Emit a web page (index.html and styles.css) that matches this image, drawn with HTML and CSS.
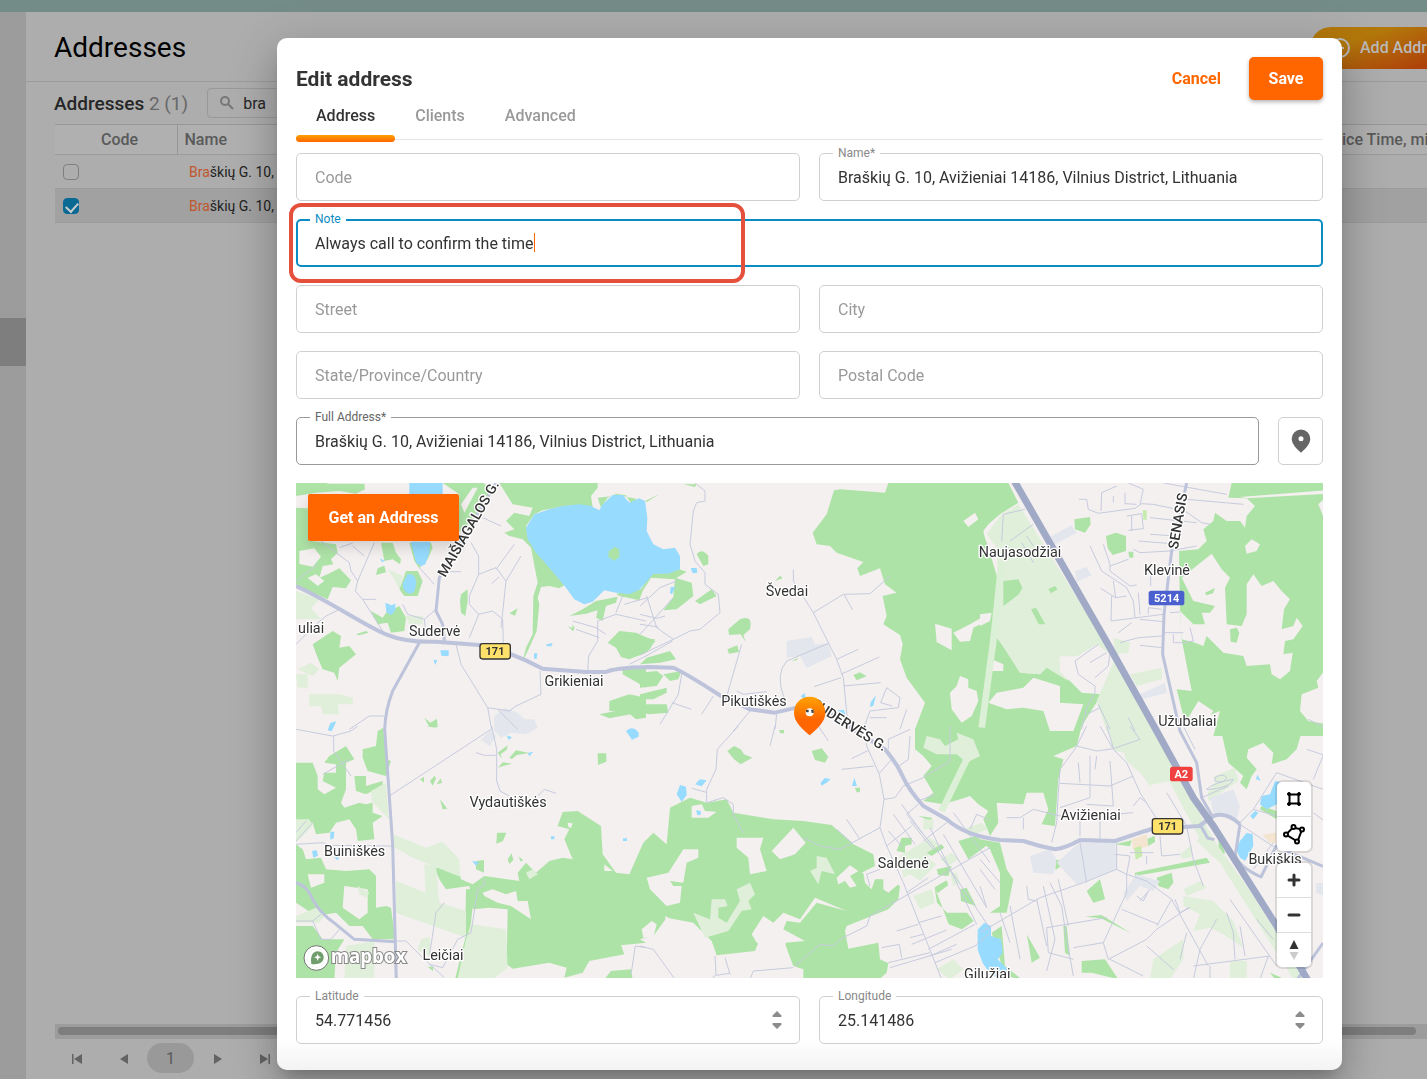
FILE: index.html
```html
<!DOCTYPE html>
<html lang="en">
<head>
  <meta charset="UTF-8">
  <meta name="viewport" content="width=device-width, initial-scale=1.0">
  <title>Addresses</title>
  <link rel="stylesheet" href="styles.css">
</head>
<body>
  <div class="topbar"></div>

  <div class="page">
    <nav class="sidebar"><div class="sidebar-active"></div></nav>

    <main class="content">
      <header class="page-header">
        <h1>Addresses</h1>
        <button class="add-button">
          <svg width="20" height="20" viewBox="0 0 20 20" fill="none" stroke="currentColor" stroke-width="2"><circle cx="10" cy="10" r="9"/><path d="M10 6v8M6 10h8"/></svg>
          Add Address
        </button>
      </header>

      <div class="list-bar">
        <h2>Addresses <span>2 (1)</span></h2>
        <div class="search">
          <svg width="16" height="16" viewBox="0 0 16 16" fill="none" stroke="currentColor" stroke-width="2"><circle cx="6" cy="6" r="4"/><path d="M9 9l5 5"/></svg>
          <input type="text" value="bra" aria-label="Search">
        </div>
      </div>

      <table class="list">
        <colgroup><col class="col-check"><col class="col-code"><col class="col-name"><col></colgroup>
        <thead>
          <tr><th></th><th class="code">Code</th><th>Name</th><th>Service Time, min</th></tr>
        </thead>
        <tbody>
          <tr>
            <td><input type="checkbox" aria-label="Select row 1"></td><td></td>
            <td class="name"><em>Bra</em>škių G. 10, Avižieniai</td><td></td>
          </tr>
          <tr class="selected">
            <td><input type="checkbox" aria-label="Select row 2" checked></td><td></td>
            <td class="name"><em>Bra</em>škių G. 10, Avižieniai</td><td></td>
          </tr>
        </tbody>
      </table>

      <div class="scrollbar"><div class="thumb"></div></div>
      <div class="pager">
        <button aria-label="First page"><svg width="10" height="10" viewBox="0 0 10 10"><path d="M0 0h1.500v10H0zM10 0v10L2 5z"/></svg></button>
        <button aria-label="Previous page"><svg width="10" height="10" viewBox="0 0 10 10"><path d="M9 0v10L1 5z"/></svg></button>
        <button class="current">1</button>
        <button aria-label="Next page"><svg width="10" height="10" viewBox="0 0 10 10"><path d="M1 0v10l8-5z"/></svg></button>
        <button aria-label="Last page"><svg width="10" height="10" viewBox="0 0 10 10"><path d="M8.500 0H10v10H8.500zM0 0v10l8-5z"/></svg></button>
      </div>
    </main>
  </div>

  <div class="overlay">
    <form class="modal" role="dialog" aria-labelledby="modalTitle">
      <div class="modal-header">
        <h2 id="modalTitle">Edit address</h2>
        <button type="button" class="cancel">Cancel</button>
        <button type="button" class="save">Save</button>
      </div>

      <div class="tabs">
        <button type="button" class="tab active">Address</button>
        <button type="button" class="tab">Clients</button>
        <button type="button" class="tab">Advanced</button>
      </div>

      <div class="row">
        <div class="field"><input type="text" placeholder="Code" aria-label="Code"></div>
        <div class="field">
          <label for="name">Name*</label>
          <input type="text" id="name" value="Braškių G. 10, Avižieniai 14186, Vilnius District, Lithuania">
        </div>
      </div>

      <div class="row">
        <div class="field focused">
          <label for="note">Note</label>
          <input type="text" id="note" value="Always call to confirm the time">
          <span class="caret"></span>
          <span class="highlight"></span>
        </div>
      </div>

      <div class="row">
        <div class="field"><input type="text" placeholder="Street" aria-label="Street"></div>
        <div class="field"><input type="text" placeholder="City" aria-label="City"></div>
      </div>

      <div class="row">
        <div class="field"><input type="text" placeholder="State/Province/Country" aria-label="State/Province/Country"></div>
        <div class="field"><input type="text" placeholder="Postal Code" aria-label="Postal Code"></div>
      </div>

      <div class="row">
        <div class="field strong">
          <label for="fullAddress">Full Address*</label>
          <input type="text" id="fullAddress" value="Braškių G. 10, Avižieniai 14186, Vilnius District, Lithuania">
        </div>
        <button type="button" class="pin-button" aria-label="Find on map">
          <svg width="20" height="24" viewBox="0 0 20 24"><path fill="#666" fill-rule="evenodd" d="M10 .5a9.300 9.300 0 0 0-9.300 9.300C.7 15 6 20.500 10 23.700c4-3.200 9.300-8.700 9.300-13.900A9.300 9.300 0 0 0 10 .5zm0 6.700a2.500 2.500 0 1 1 0 5 2.500 2.500 0 0 1 0-5z"/></svg>
        </button>
      </div>

      <div class="map">
        <svg class="map-canvas" viewBox="0 0 3081 1485" preserveAspectRatio="xMidYMid slice">
          <defs>
            <linearGradient id="pin" x1="0" y1="0" x2="0" y2="1"><stop offset="0" stop-color="#ffa200"/><stop offset="0.600" stop-color="#ff6600"/></linearGradient>
          </defs>

          <!-- forests -->
          <g class="forest">
            <g transform="translate(0 -6)">
              <path d="M0 0H55L100 8 205 8 207 25 180 38 130 30 60 35 0 45Z"/>
              <path d="M0 80L35 82 45 180 120 190 125 215 105 235 112 250 80 255 70 290 95 280 130 262 165 298 150 322 110 318 95 355 60 340 0 312Z"/>
              <path d="M440 6H560L590 20 565 80 520 130 480 160 490 40Z"/>
              <path d="M255 185H290L300 215 315 235 312 250 290 235 265 240ZM245 262l20-8 5 20-30 8Z"/>
              <path d="M340 185H405L410 200 395 235 370 262 355 240ZM330 270h35l15 30-15 45h-40l-15-20Z"/>
              <path d="M610 6H905L905 20 885 45 890 78 830 72 740 88 715 100 690 135 700 175 735 220 800 275 810 310 790 322 760 315 735 318 725 350 730 370 722 450 700 500 680 540 690 500 710 460 712 345 725 305 705 200 680 175 640 165 625 155 655 145 630 120 655 95 700 105 710 80 650 70 625 30Z"/>
              <path d="M905 50l10 30 20-30 25-12 30 5 15 25 20-5-5-10-50-10Z"/>
              <path d="M960 338L1035 325 1065 280 1140 262 1172 272 1135 295 1065 290 1040 330 1030 358 970 345Z"/>
              <path d="M820 405L860 385 900 360 965 347 960 365 930 375 920 420 900 410 905 388 870 398Z"/>
              <path d="M935 485L970 450 1020 455 1078 480 1050 515 1000 535 975 528 960 500Z"/>
              <path d="M50 490L110 450 135 465 130 500 160 495 180 520 130 560 125 600 115 575 80 565 65 530Z"/>
              <path d="M495 340L515 325 515 360 508 405 495 395 492 360ZM640 397l25-15-8 22ZM815 435l15 7-2-13 8 12-5 10ZM180 460l30-10 8 5-30 8Z"/>
              <path d="M225 390l35 20 10-15 40-20 20 35-5 40-40 5-10-30-30 5ZM385 710l18 15 20-12 2 25-25 0Z"/>
              <path d="M980 560h70v60l-70-40ZM940 660l60-20 50 10v60l-30 5-30-25h-50ZM910 700l90-18 20 15-80 15Z"/>
            </g>
            <g transform="translate(1032 -6)">
              <path d="M0 470L45 475 30 505 0 520ZM0 550L20 530 90 510 108 535 60 545ZM0 575l50-5 20 15-20 30-50 5ZM70 580l55-10-10 25-25 5ZM0 640l80-20v15l-40 20H0ZM0 670h80l5 25-60 5-25-10Z"/>
              <path d="M170 220q15-20 35 5v25l-15 5ZM105 290l50 15 5 40-50 40-40 3 30-40ZM165 360l50-35 15 20-50 25ZM265 445l35-30q40-15 30 30l-20 17 7 22-15-24-35 2ZM262 505l30-12 5 20-30 5ZM640 582l20-8 20 12-30 12ZM15 60l45-22-40 25ZM130 10h40l-5 8ZM405 300l15-16 8 8ZM455 540l20-10-5 8Z"/>
              <path d="M745 6L735 35 600 25 582 28 560 100 518 155 530 190 570 195 590 215 670 243 652 262 660 285 720 262 735 310 770 335 728 345 740 405 730 430 780 462 788 490 780 535 800 590 855 665 825 745 825 805 850 825 875 855 850 885 880 935 850 960 910 970 975 950 990 945 1015 970 1045 990 1030 1015 1050 1065 1075 1025 1070 965 1150 970 1160 935 1210 935 1225 985 1205 1030 1245 1035 1255 895 1270 835 1240 825 1310 795 1325 735 1385 640 1325 635 1290 600 1220 555 1200 580 1140 575 1095 500 1070 470 1075 300 1030 150 1045 130 1080 100 1135 65 1105 6Z"/>
            </g>
            <g transform="translate(2052 -6)">
              <path d="M283 115L330 108 332 130 315 155 285 145ZM378 165l30-10 30 10v45l-40 12-15-20ZM445 212h15v18h-12Z"/>
              <path d="M755 6H1040V765H940 700L720 690 695 700 660 720 610 705 590 625 635 630 605 475 600 385 597 210 655 205 680 180 670 145 700 120 705 95 740 120 780 120 795 140 800 105 825 75 800 52 745 50Z"/>
            </g>
            <g transform="translate(0 729)">
              <path d="M0 110L50 110 65 150 65 190 85 205 120 185 80 165 85 140 120 140 120 115 85 110 100 90 150 60 175 100 150 110 150 190 135 230 145 245 190 230 210 235 230 230 230 260 260 270 230 290 235 340 185 345 180 310 160 280 120 290 100 320 60 325 50 290 0 285Z"/>
              <path d="M200 70L240 60 245 15 262 5 270 100 285 105 270 150 215 135 200 95ZM175 150h35v30l50-15v15l-50 25-30-10Z"/>
              <path fill-rule="evenodd" d="M0 355L20 370 30 400 75 395 90 430 150 435 220 430 240 450 240 545 270 540 285 545 298 640 230 640 200 600 160 600 120 560 60 570 0 530ZM35 445h50v25l-40 15ZM145 480L215 490 215 560 190 580 140 545Z"/>
              <path d="M0 600L50 600 80 640 145 640 120 680 115 760 0 760Z"/>
              <path d="M372 160l12-8v18ZM402 165l14-16 4 8-10 22ZM422 175l12-18 4 14ZM432 220l22 28-14 2ZM603 320l28 0-10 25-20 8ZM635 400l12-18 5 20-12 12ZM668 392l14 10-8 5ZM540 405l24-3v38l-24-10ZM905 82l26 0v25l-25 10ZM390 0h34l-5 5ZM395 722h16v14Z"/>
              <path d="M605 80l30-22-3 14-18 12 4 14ZM640 95l20-22 40 8-38 6-14 12ZM606 125l14-16 28 4-30 8Z"/>
              <path d="M415 425L488 430 495 460 530 475 565 450 670 465 665 440 690 410 720 440 760 405 800 395 830 400 805 340 820 310 785 300 800 258 845 255 915 300 920 385 960 440 1000 445 1042 350 1072 320 1112 355 1122 245 1182 215 1232 230 1292 220 1312 260 1432 280 1522 285 1607 297 1672 355 1732 385 1737 420 1697 440 1772 460 1812 480 1807 520 1777 550 1652 600 1647 615 1657 668 1747 650 1752 700 1777 712 1772 740 1750 760H1522V730L1492 720 1467 655 1480 640 1370 625 1387 650 1377 675 1262 688 1247 645 1192 590 1112 575 1072 630 1032 640 1050 650 975 658 985 685 880 705 860 740 805 755 812 725 760 710 650 728 632 715 635 550 580 545 530 550 520 480 450 490 430 460Z"/>
              <path d="M925 760l20-25 60-5 5 30ZM510 490l25 0-10 100-15 80-25 90h-8l30-120Z"/>
            </g>
            <g transform="translate(1032 729)">
              <path d="M262 75l20-15 20 10 10 15 25 10-35 20-20-15ZM515 75l30-8 20 25-10 18-30-8ZM418 12h14v10h-12ZM645 185h15v14h-10Z"/>
              <path d="M770 375l15-40h30v20l-20 5v20ZM955 345l50-15 40 25-60 45ZM835 270l40 5 5 30-8-20Z"/>
            </g>
            <g transform="translate(2052 729)">
              <path d="M720 0H970L950 70 920 100 875 115 880 80 850 50 805 70 800 95 830 130 815 150 800 190 780 170 790 150 745 110Z"/>
              <path d="M0 340L60 350 80 430 100 460 80 560 30 560 60 540 60 440 30 370ZM320 495l40-35 15 60-35 10ZM530 455l45-15 5 30-15 20-30-10ZM140 625l40 70-25 15-10-60ZM250 600l10 0 10 90-15-10ZM305 705l70-5 40 60-80-20h-30ZM35 620l30-20 10 120 50 40-50-10ZM870 740l35 15-20 5Z"/>
              <path d="M465 440L680 395 690 410 465 450ZM715 330l20 50-18 20ZM500 340l45-20 0 15-40 25ZM405 355l50-12-5 18ZM315 572l50-5 88 55-90-45ZM845 240l45 15v25l-50-30ZM228 400l28 12-30 20Z"/>
            </g>
          </g>

          <!-- clearings -->
          <g class="ground">
            <g transform="translate(0 -6)"><path d="M10 210l45-8 20 25-25 30-40-8ZM35 290l25-10 25 20-20 15ZM495 70l35-50 15 0-40 75Z"/></g>
            <g transform="translate(1032 -6)">
              <path d="M885 428l50 15v65l-45-25ZM940 455l50-25 60-35v20l-50 25-10 40-30 2ZM970 120L1005 95 1015 115 985 138ZM930 635l20-20 10-30 25 10 0 25 25 10 5 30-20 45-30 20-30-40ZM1020 400l35-5-5 25-30 15ZM1055 535l35 15v20h-35ZM1030 155l10 30 10-20Z"/>
              <path d="M1045 665L1070 635 1150 620 1180 590 1260 615 1260 665 1330 670 1300 750 1230 750 1210 690 1150 680 1100 685Z"/>
            </g>
            <g transform="translate(2052 -6)">
              <path d="M605 290L695 218 725 265 750 290 735 320 740 430 785 435 800 400 800 310 820 280 845 315 880 300 905 330 930 355 912 385 905 445 940 435 950 410 968 435 940 475 915 480 910 520 938 515 930 570 900 595 875 580 870 550 800 555 790 525 730 515 680 465 670 495 645 485 605 475 600 390 640 430 675 430 665 395 690 395 705 375 640 360Z"/>
              <path d="M795 195l20-20 25 15-10 20-30 8ZM780 48L1040 28V38L800 52ZM1015 70l20-20v70ZM1040 560l-30 40 5 20-50 20-5 50 25 30 60 10ZM625 710l30-50 45 30-15 20Z"/>
            </g>
            <g transform="translate(0 729)"><path d="M560 500l30-10 40 15 30-10 5 30h30l10 55-60-40-40-10-40-20ZM815 290l15 2-5 15-8-4ZM925 415l25 20-25 0Z"/></g>
            <g transform="translate(1032 729)">
              <path d="M290 335L370 335 360 370 380 435 330 445 325 395 290 365ZM395 375L460 305 497 350 465 385 420 400ZM20 455L85 440 130 370 175 370 175 395 140 410 130 470 90 465 100 480 125 480 120 530 80 540 30 490Z"/>
              <path d="M335 625L370 570 400 590 430 560 480 580 525 515 620 555 530 530 480 590 440 585 430 610 495 645 435 650 445 690 350 650ZM155 240l30-5 10 20 35 2-25 18h-50ZM590 455l40-37 25 17-25 15 20 30-20 5-15-20-20 10ZM670 440l45-15 60 50-30 25-15-10 0-30-25 0-10 30-20-20ZM5 610l30-25 15 10-10 40-30 0ZM75 570l60 30 30 0-10 20-70 10Z"/>
            </g>
          </g>

          <!-- fields and parks -->
          <g class="field-area">
            <g transform="translate(0 -6)"><path d="M0 330L70 355 45 380 75 415 0 415ZM275 265l45 20-10 40-15-30ZM330 405h50v25h-40ZM5 565l40-20 25 20-20 20ZM0 580h35v40H5ZM40 640h90l40 10v20h-45l5 30H80l-5-25H40Z"/></g>
            <g transform="translate(2052 -6)">
              <path d="M60 105L115 70 140 110 235 260 390 510 520 750H380L350 660 400 545 390 520 350 490 285 530 240 530 240 570 265 600 200 560 180 580 120 575 45 460 55 300 50 200 20 160Z"/>
              <path d="M400 470l50 15-5 30-40 5ZM450 580l95-20 0 35-75 20Z"/>
              <path fill="none" stroke="#dcefd7" stroke-width="20" d="M65 240L40 480 5 740M-35 825L-115 990"/>
              <path d="M-160 765l40 10 15 20 40-20-5-20 50 20 20 50-40 20-30-25-60 0-40-20Z"/>
            </g>
            <g transform="translate(0 729)"><path d="M0 280L40 280 50 300 0 350ZM225 195l45-25 8 110-50-55ZM290 325L390 365 440 347 490 400 492 452 350 395 290 360ZM385 415L420 420 430 530 510 555 510 635 300 560 300 465 388 500ZM525 595L630 610 635 725 590 760H485L510 640ZM375 640l25-8 5 60-40-20ZM150 660l85-15v110h-90ZM0 570l60-25 30 20-20 25-70 0ZM185 480l35 20-10 15-20-10ZM690 440l20-10 15 15-25 15Z"/></g>
            <g transform="translate(1032 729)"><path d="M290 490l40-20 15 35-20 20 10 25-30 5-40 60-70 20-35-75 50 20 5-60 40 0 8 20-28 5v30l25 15 40-65ZM530 390l30 5 25 50-40-10-10 40-25-40 20-10ZM780 390l90-55 30 20-40 40 30 20-50 50-30-20-20 10ZM820 510l55-20 10 40-45 20ZM890 730l50-30 30 30-40 30ZM850 280l30 0 0 30-30 0ZM900 400l35-20 20 20-30 20ZM930 440l20 0 10 30-20 10ZM970 310l55-20 20 20-60 20Z"/></g>
            <g transform="translate(2052 729)"><path d="M395 65L385 0H525L650 245 700 340 800 480 980 760H940L720 410 600 300 480 140ZM610 510l90 15 60 60 30 80-60-40-40-20-50 10 20-50-50-25ZM520 700l90-60v60l-40 60h-60ZM610 490l50-25 20 20-60 25ZM750 705h50v50h-50ZM680 160l85-35 10 40-90 60ZM590 355l45-12 0 50-30 5Z"/></g>
          </g>
          <g class="ground"><path d="M2445 815l20-10 20 5 5 30-50 0ZM2565 905l55-10 90 170-70 60-60-10ZM2650 735l30 0 80 160-30 40-40-40ZM2290 520h55v18h-55Z"/></g>
          <g class="forest">
            <path d="M2122 294l45-5 12 25-10 20-47 35ZM2257 319l20-10 8 10-20 12ZM2205 379l15-5 28 50h-20ZM2802 439l20-5 8 15-8 30-18-3ZM2727 329l30-14-6 16-20 6Z"/>
            <path d="M1917 1212l35-20 5 15-35 25ZM1922 1159l45-10-10 30-30-2ZM1992 1219l20-5 28 55-45-15ZM1915 1209l8 50 30 30 60 0 20 25-35 25-40-15ZM1892 1109l45-25 8 10-38 25Z"/>
          </g>

          <!-- built up areas -->
          <g class="urban">
            <path d="M595 699l30-25 40 15 20 20h30l10 25-35 20-45-5-30 15-20-20ZM1472 474L1547 462 1557 484 1597 481 1607 519 1532 556 1512 519 1472 524Z"/>
            <path d="M2257 164L2327 127 2342 149 2277 184ZM2337 264l35-12 15 25-45 20ZM2532 634l75-35 5 30-75 20Z"/>
            <path d="M2202 1119l60-20 20 30-10 45-60-5ZM2332 1094L2352 1079 2457 1074 2462 1159 2342 1204 2282 1139ZM2482 1229l40-55 70 20-20 30-40-15-40 45ZM2742 944L2812 919 2832 969 2822 1009 2752 989ZM555 770l30-30 15 20-20 30ZM3060 1200h30v40l-30-10Z"/>
          </g>
          <path fill="#f3e5cf" d="M2507 1069L2552 1054 2557 1089 2512 1104ZM2900 1055l40-6v30l-20 0Z"/>
          <path fill="#c5ecac" d="M2515 1095l20-6 4 30-20 12ZM2540 82h12v28h-10Z"/>

          <!-- water -->
          <g class="water">
            <path d="M715 94L760 79 800 69 850 64 885 69 910 82 920 64 950 36 980 36 1000 59 1030 46 1047 54 1054 104 1052 144 1072 184 1102 199 1137 194 1152 219 1152 259 1117 272 1072 272 1032 319 1000 334 960 329 925 322 890 356 865 364 835 349 810 314 760 254 720 209 695 169 690 134Z"/>
            <path d="M340 0H440V40H340ZM345 176H403L400 209 388 244 375 249 360 239ZM335 272q25 0 25 25 0 35-18 35-22-5-22-30ZM268 359l18 8 12-5v20l-12 15-15-10ZM433 502l25 0 0 18-22-2ZM412 530l12 2-6 14ZM752 484l18-4-4 10-14 0ZM714 511l10 0-2 16-8 0ZM252 226l14 8-8 4ZM95 742l8-22 18-5-14 30Z"/>
            <path d="M1184 255l18 0 2 14-14 2ZM1124 312l14 0-10 22-6-4ZM1514 640l12-10 4 20ZM1724 658l16-22-8 32-10 4ZM1626 682l18-2 4 14-14 4Z"/>
            <path d="M103 1046l12 0-2 20-10 4ZM48 1104l14-2 4 16-14 6ZM112 1120l20 0-8 12ZM990 744q20-18 38 5v12l-20 9ZM765 1060h10v9h-10ZM981 1066h12v8h-12ZM528 1134l22 4-10 10ZM632 757l16 6-10 8ZM695 810l17-4-12 14Z"/>
            <path d="M1142 934l10-28 18 5 2 25-15 20ZM1197 904l15-15 20 3-15 18ZM1200 982l14 2 0 12-10 0ZM1574 899l12-14 18 3-10 10-18 10ZM1675 884l8 25h-15Z"/>
            <path d="M2897 939l25-5 15-40 25 5-10 60-40 20-20-15ZM2832 1074l20-25 18 5 2 35-25 45-15-10-12-25ZM2862 999l15-15 10 5-15 20ZM2884 875l10 18-14-4ZM2045 1340l20-21 20 10 0 30 30 10 5 40-15 20 40 40-5 15H2090L2060 1440 2045 1400Z"/>
          </g>
          <path class="forest" d="M938 205l20-14 12 10v20l-15 12-18-12Z"/>

          <!-- side roads -->
          <g class="street">
            <g transform="translate(0 -6)">
              <path d="M75 180L160 245 165 270 185 300 178 330 200 355 240 355M200 355L260 450M185 300L235 185M205 225l-35-30M0 490L60 430 90 405 125 388M130 200l40-14M0 300L65 250M370 260L415 310M320 370L335 400 385 415 420 385M385 415l5 50M440 272h55M525 185L548 225 548 280 520 345 520 370 548 400 520 470M548 280l52-20 30 40-15 140M600 265L655 190M548 400L590 390 620 415 622 490M630 300L675 225M587 308l22-20M560 110l55 25M480 490L495 550 575 680 587 745M575 680L640 690 660 675 735 640 732 570M605 685l60 60M160 745L220 705 265 705"/>
              <path d="M875 570L878 525 905 480 905 420 960 400 1050 420M830 420L900 440 930 460M840 445L910 470M960 395l20-50M985 370l70-20M1000 550L1050 525 1130 480"/>
            </g>
            <g transform="translate(1032 -6)">
              <path d="M165 6L195 30 195 60 170 65 160 90 150 190 165 240 195 275 195 310 235 340 240 395 180 445 150 450 100 475 0 522M20 345L50 440 100 475M0 400L50 412 75 405M0 430L55 438M0 460L100 350M0 375L60 320 110 300"/>
              <path d="M460 265L460 300 520 395 590 535 610 590 625 745M520 395L610 340 690 338 750 285M613 342l25 45M590 535l65-30M440 540L565 487M603 580L718 528M610 615L722 605M522 617L603 590M440 540Q405 580 432 650M305 490L262 640M290 630L310 640 380 632M125 580L115 640 60 730M220 645L185 700M95 665l60 20M410 700L405 745M330 690L280 750M722 665L740 620 780 650 775 680 690 690 670 745M722 665l35 10M800 685L780 745M690 710h50"/>
            </g>
            <g transform="translate(2052 -6)">
              <path d="M70 100L65 180M70 100l65-15M90 180L160 130M125 185l35 60M140 165l20 30M297 55L320 55 325 85 355 97 465 82 485 68 520 70 615 90 665 125 690 130M363 90L365 35 410 15M400 45v20M435 35L435 68 470 70M445 6L490 25 480 70M440 105L485 98M455 105v45M485 98l5 45-45 5M510 110L650 125M550 6L740 40M620 55L790 70M510 160l80 5M475 180L600 190M460 205L480 215 570 210 650 195M330 195L365 270 440 320 460 360 465 410M370 190L390 250 390 270 450 315 470 312M390 255l55-20M400 300L407 350 440 345M362 322L407 350M395 345L393 420 550 400M480 415L550 422M455 425L415 455M475 335l5 65M420 485L475 470 545 465M480 493L548 500M550 455h60M580 460v25h30l30-5-10-40M505 400V380L545 385M570 395l30-2M512 260v55"/>
              <path d="M355 490L285 540 295 580 345 615 345 635 320 680 305 745M345 590L385 555 390 515M330 545l50-30M355 670L390 745M320 700l40-20M445 710l20 40M985 715l50 25"/>
            </g>
            <g transform="translate(0 729)">
              <path d="M0 10L110 30 165 15 185 0M113 30L113 75 165 150M80 145L160 100M283 208L585 10M540 80L565 88H600M587 0L602 70 602 165 612 195 640 210M725 210L745 190 780 202M0 355L80 350 100 358 290 360M0 345L50 290M0 320L30 285M565 458L565 478 545 490 525 620 485 640 440 725 400 715M445 530L420 560 400 690M300 645H330L375 690 445 755M50 585L75 640 105 640 130 610M0 585L50 585 75 565M1005 745L1018 660 1050 665"/>
            </g>
            <g transform="translate(1032 729)">
              <path d="M295 0L232 70 228 130 200 190 200 230 250 215 280 235 280 265 310 320M155 187l45 12M405 0L390 60M535 0l30 45M490 335L540 360 600 370 720 305 732 220 718 145 680 60 675 30M732 220L765 215 790 180 850 155 930 105 930 0M720 305L740 360 790 470 905 760M740 360l75-60M620 280l40 60M590 310l45 40M635 98l50-25M605 130L702 120M718 142L755 100M745 70L745 40 810 10M810 30L805 100 770 125M760 265L825 355M785 235L850 325M745 315l40 45M810 285l70 85M835 225l50-20M835 235L800 265 900 385 1045 600M870 305L1010 595M910 325L1040 545M940 260L1050 410M850 345L920 290M690 480L680 445 720 430M800 500L865 455M725 550L1050 365M725 550L690 570 680 600 600 640 580 660 540 655 465 720M835 590L905 570M770 615L835 595M810 635L850 625M815 655L920 612M865 670L1005 595M725 665L778 655 785 695M745 710L870 680M750 725L935 670M885 710L1005 660 1050 620M870 690L950 655M0 660L40 670 105 760M225 690L228 745 215 760M228 748l40-6M255 695L270 745M330 760L340 735 460 725M990 310L1010 265 1045 280"/>
            </g>
            <g transform="translate(2052 729)">
              <path d="M320 0L290 60 350 75 400 68 480 40 450 0M290 62L240 130 235 200 230 290 215 350M240 172L390 180 460 150M330 90L330 215 240 245M295 110L300 170M350 90L345 130M390 105L400 240 320 235M360 0L400 70 440 110 480 200 550 310M380 0L400 65M80 275L120 275 160 250 240 270 310 265M130 275L130 310M300 265L300 330M360 285V340M400 265L460 260M460 240L480 215 500 230M560 200L620 300 640 400 670 480M610 0L645 70M500 320L560 290"/>
              <path d="M0 620L180 515 310 470 410 430 440 445 450 390 405 385M300 350L320 470M410 350V430M540 330L545 390 600 385M500 390l0 25M450 380L520 380M440 445L440 500 370 650 280 665M200 605L380 575M200 605L205 680 280 700M210 470L245 540 260 640 280 750M235 460L265 600M190 480L225 640 200 735M170 520L200 660M140 480L145 520 170 525M90 540L120 700M60 560L90 650M0 430L45 490M0 480L20 545M0 400L60 470M370 650L385 700 500 640 530 610 625 545M390 700L490 750M425 550L535 595M440 445L500 465 575 520 685 720M470 510l20 15 15-30M510 490L480 525M585 520L600 560 630 545M575 520L530 600M620 620L600 700M710 580L660 670 640 760M740 560L760 620 765 700M780 600L795 690M640 720L870 690M865 690L840 760M750 520L890 720M830 580L880 640M580 730L500 660M690 720v40"/>
              <path d="M680 190Q700 170 760 160 750 185 690 190ZM705 155Q730 140 740 155 730 175 705 165ZM665 215L745 180M780 295L885 365M820 250L890 270M890 140L820 250 780 290M890 140L1029 190M820 430L880 350M900 380L990 280M1029 90L1000 160M980 70L1040 90M1000 260L1040 290"/>
            </g>
          </g>

          <!-- main roads -->
          <g class="road">
            <path d="M600 0L430 284 420 384 440 424 445 474"/>
            <path d="M370 479L290 624Q268 680 266 739L290 1085 301 1495"/>
            <path d="M0 1199Q35 1209 50 1249 70 1289 120 1324L175 1369 300 1376"/>
            <path d="M2672 0L2627 204 2604 394 2600 514 2652 744 2702 839 2717 944 2752 1005M2832 1024L2818 1115Q2825 1150 2895 1182L2940 1090 3081 1150M3000 1495L3081 1380M2715 1030l20 35 20 5"/>
          </g>
          <path class="road wide" d="M0 309C100 354 200 424 270 454Q330 479 420 476L550 486Q640 504 740 557L870 567 930 567Q960 554 1060 552L1130 554Q1150 559 1275 639L1362 679 1437 689 1502 674 1600 690 1680 745 1767 799Q1802 840 1820 880T1882 969L1952 1009Q2010 1060 2112 1071L2182 1074Q2230 1090 2277 1099 2310 1095 2352 1071L2457 1074 2562 1039 2710 1029 2752 999Q2790 985 2832 1024"/>
          <path class="highway" d="M2155 -6L2442 494 2582 744 2692 944 2752 1029 2942 1329 3037 1495"/>

          <!-- place names -->
          <g class="place">
            <text x="6" y="450" text-anchor="start">uliai</text>
            <text x="416" y="460">Sudervė</text>
            <text x="834" y="609">Grikieniai</text>
            <text x="1473" y="339">Švedai</text>
            <text x="1374" y="669">Pikutiškės</text>
            <text x="2172" y="222">Naujasodžiai</text>
            <text x="2613" y="276">Klevinė</text>
            <text x="2674" y="729">Užubaliai</text>
            <text x="636" y="972">Vydautiškės</text>
            <text x="176" y="1119">Buiniškės</text>
            <text x="441" y="1431">Leičiai</text>
            <text x="2384" y="1011">Avižieniai</text>
            <text x="1822" y="1155">Saldenė</text>
            <text x="2937" y="1143">Bukiškis</text>
            <text x="2074" y="1488">Gilužiai</text>
          </g>
          <g class="road-name">
            <text transform="translate(448 285) rotate(-60)">MAIŠIAGALOS G.</text>
            <text transform="translate(2645 200) rotate(-80)">SENASIS</text>
            <text transform="translate(1762 806) rotate(32)" text-anchor="end">SUDERVĖS G.</text>
          </g>
          <g class="shield">
            <rect x="552" y="482" width="91" height="46" rx="8" fill="#fee16b" stroke="#333" stroke-width="4"/>
            <text x="597" y="517">171</text>
            <rect x="2569" y="1007" width="91" height="46" rx="8" fill="#fee16b" stroke="#333" stroke-width="4"/>
            <text x="2615" y="1042">171</text>
            <rect x="2558" y="323" width="107" height="44" rx="8" fill="#4a60cf"/>
            <text class="light" x="2612" y="357">5214</text>
            <rect x="2622" y="851" width="68" height="44" rx="8" fill="#f04040"/>
            <text class="light" x="2656" y="885">A2</text>
          </g>

          <!-- marker -->
          <path fill="url(#pin)" d="M1541 641C1513 641 1494 662 1494 689 1494 717 1520 739 1541 757 1562 739 1588 717 1588 689 1588 662 1569 641 1541 641Z"/>
          <circle cx="1541" cy="688" r="12" fill="#fff"/>
          <path fill="#444" d="M1530 680h8v8h-8ZM1545 680h8v10h-6Z"/>

          <!-- logo -->
          <g class="logo">
            <circle cx="61" cy="1425" r="32" fill="none" stroke="#fff" stroke-width="9"/>
            <circle cx="61" cy="1425" r="37" fill="none" stroke="#777" stroke-width="3"/>
            <circle cx="61" cy="1425" r="28" fill="#fff"/>
            <path fill="#6f9e6c" d="M46 1443C42 1420 50 1405 65 1405 76 1405 83 1414 83 1423 83 1440 66 1446 46 1443Z"/>
            <path fill="#fff" d="M65 1412l3 8 8 3-8 3-3 8-3-8-8-3 8-3Z"/>
            <text x="104" y="1441">mapbox</text>
          </g>
        </svg>

        <button type="button" class="get-address">Get an Address</button>

        <div class="map-controls">
          <div class="control-group">
            <button type="button" aria-label="Draw rectangle"><svg width="16" height="16" viewBox="0 0 16 16" fill="#000" stroke="#000"><path fill="none" stroke-width="2" d="M3.500 3.500h9v9h-9z"/><circle cx="3" cy="3" r="1.500"/><circle cx="13" cy="3" r="1.500"/><circle cx="3" cy="13" r="1.500"/><circle cx="13" cy="13" r="1.500"/></svg></button>
            <button type="button" aria-label="Draw polygon"><svg width="22" height="22" viewBox="0 0 22 22" fill="#fff" stroke="#000" stroke-width="2"><path d="M3 11.500L10 4.500l9 2-4.500 12z"/><circle cx="3" cy="11.500" r="2"/><circle cx="10.500" cy="4" r="2"/><circle cx="19" cy="6.500" r="2"/><circle cx="14" cy="18.500" r="2"/></svg></button>
          </div>
          <div class="control-group">
            <button type="button" aria-label="Zoom in"><svg width="14" height="14" viewBox="0 0 14 14" stroke="#333" stroke-width="3" stroke-linecap="round"><path d="M7 2v10M2 7h10"/></svg></button>
            <button type="button" aria-label="Zoom out"><svg width="14" height="14" viewBox="0 0 14 14" stroke="#333" stroke-width="3" stroke-linecap="round"><path d="M2 7h10"/></svg></button>
            <button type="button" aria-label="Reset north"><svg width="10" height="20" viewBox="0 0 10 20"><path fill="#333" d="M5 0l4.500 9h-9z"/><path fill="#ccc" d="M5 20l4.500-8h-9z"/></svg></button>
          </div>
        </div>
      </div>

      <div class="row">
        <div class="field">
          <label for="lat">Latitude</label>
          <input type="number" id="lat" step="any" value="54.771456">
          <svg class="spinner" width="10" height="18" viewBox="0 0 10 18"><path d="M5 0l4.500 4.500q.5 1.500-.7 1.500H1.200Q0 6 .5 4.500zM5 18l4.500-4.500q.5-1.500-.7-1.500H1.200Q0 12 .5 13.500z"/></svg>
        </div>
        <div class="field">
          <label for="lng">Longitude</label>
          <input type="number" id="lng" step="any" value="25.141486">
          <svg class="spinner" width="10" height="18" viewBox="0 0 10 18"><path d="M5 0l4.500 4.500q.5 1.500-.7 1.500H1.200Q0 6 .5 4.500zM5 18l4.500-4.500q.5-1.500-.7-1.500H1.200Q0 12 .5 13.500z"/></svg>
        </div>
      </div>
    </form>
  </div>
</body>
</html>
```
FILE: styles.css
```css
* {
  box-sizing: border-box;
}

body {
  display: flex;
  flex-direction: column;
  height: 100vh;
  margin: 0;
  overflow: hidden;
  background-color: #adadad;
  font-family: Roboto, Arial, sans-serif;
  font-size: 16px;
  color: #333;
}

button, input {
  font-family: inherit;
  font-size: inherit;
}

button {
  padding: 0;
  border: none;
  background: none;
  cursor: pointer;
}

h1, h2 {
  margin: 0;
}

.topbar {
  height: 12px;
  background-color: #748c88;
}

/* page behind the dialog */
.page {
  display: flex;
  flex: 1;
  min-height: 0;
}

.sidebar {
  width: 26px;
  padding-top: 306px;
  background-color: #9d9c9c;
}

.sidebar-active {
  height: 48px;
  background-color: #7e7e7e;
}

.content {
  display: flex;
  flex-direction: column;
  flex: 1;
  min-width: 0;
}

.page-header {
  display: flex;
  align-items: center;
  justify-content: space-between;
  height: 70px;
  padding-top: 2px;
  padding-left: 28px;
  border-bottom: 1px solid #9b9b9b;
}

.page-header h1 {
  font-size: 28px;
  font-weight: 400;
  color: #000;
}

.add-button {
  display: flex;
  align-items: center;
  gap: 10px;
  flex-shrink: 0;
  width: 160px;
  height: 42px;
  margin-right: -43px;
  padding-left: 20px;
  border-radius: 21px;
  background: linear-gradient(160deg, #b3780b 30%, #ae420a 80%);
  font-weight: 500;
  color: #bababa;
  white-space: nowrap;
}

.list-bar {
  display: flex;
  align-items: center;
  gap: 19px;
  height: 42px;
  padding-left: 28px;
}

.list-bar h2 {
  font-size: 19px;
  font-weight: 500;
  color: #262626;
}

.list-bar h2 span {
  font-weight: 400;
  color: #686868;
}

.search {
  display: flex;
  align-items: center;
  gap: 6px;
  width: 220px;
  height: 30px;
  padding-left: 11px;
  border: 1px solid #999;
  border-radius: 4px;
  color: #777;
}

.search input {
  width: 100px;
  border: none;
  background: none;
  color: #262626;
}

.list {
  width: calc(100% - 29px);
  margin-left: 29px;
  border-collapse: collapse;
  table-layout: fixed;
}

.col-check {
  width: 46px;
}

.col-code {
  width: 76px;
}

.col-name {
  width: 1126px;
}

.list th {
  height: 30px;
  padding: 0 7px;
  border-top: 1px solid #979797;
  border-bottom: 1px solid #9b9b9b;
  background-color: #b0b0b0;
  font-weight: 500;
  text-align: left;
  color: #5a5a5a;
  white-space: nowrap;
}

.list .code {
  padding: 0;
  border-right: 1px solid #979797;
}

.list td {
  height: 34px;
  padding: 0 8px;
  border-bottom: 1px solid #9b9b9b;
}

.list .name {
  padding-left: 12px;
  font-size: 14px;
  color: #222;
}

.list em {
  font-style: normal;
  color: #c2562b;
}

.list .selected {
  background-color: #a1a1a1;
}

.list input {
  display: block;
  position: relative;
  width: 16px;
  height: 16px;
  margin: 0;
  border: 1px solid #808080;
  border-radius: 4px;
  appearance: none;
}

.list input:checked {
  border-color: #0b6a94;
  background-color: #0b6a94;
}

.list input:checked::after {
  content: "";
  position: absolute;
  top: 1px;
  left: 4px;
  width: 6px;
  height: 10px;
  border: solid #ccc;
  border-width: 0 2px 2px 0;
  transform: rotate(42deg);
}

.scrollbar {
  height: 15px;
  margin-top: auto;
  margin-left: 29px;
  padding: 3px 11px 3px 3px;
  background-color: #9c9c9c;
}

.thumb {
  height: 8px;
  border-radius: 4px;
  background-color: #7e7e7e;
}

.pager {
  display: flex;
  align-items: center;
  height: 40px;
  padding-bottom: 2px;
  padding-left: 27px;
}

.pager button {
  width: 47px;
  height: 30px;
  color: #5a5a5a;
  fill: #636363;
}

.pager .current {
  border-radius: 15px;
  background-color: #999;
}

/* dialog */
.overlay {
  display: flex;
  align-items: flex-start;
  position: fixed;
  inset: 0;
  padding: 38px 85px 9px 277px;
}

.modal {
  flex: 1;
  display: flex;
  flex-direction: column;
  gap: 18px;
  min-width: 0;
  padding: 19px 19px 26px;
  border-radius: 10px;
  background: linear-gradient(#fff, #fff 97%, #f3f3f3);
  box-shadow: 0 11px 15px -7px rgba(0, 0, 0, 0.2), 0 24px 38px 3px rgba(0, 0, 0, 0.14), 0 9px 46px 8px rgba(0, 0, 0, 0.12);
}

.modal-header {
  display: flex;
  align-items: center;
  gap: 28px;
  height: 43px;
}

.modal-header h2 {
  flex: 1;
  font-size: 21px;
  font-weight: 700;
}

.cancel {
  font-weight: 700;
  color: #ff6600;
}

.save {
  width: 74px;
  height: 43px;
  border-radius: 5px;
  background-color: #ff6600;
  box-shadow: 0 2px 4px rgba(0, 0, 0, 0.3);
  font-weight: 700;
  color: #fff;
}

.tabs {
  display: flex;
  height: 40px;
  margin-top: -18px;
  margin-bottom: -5px;
  border-bottom: 1px solid #e4e4e4;
}

.tab {
  position: relative;
  height: 30px;
  padding: 0 20px;
  font-weight: 500;
  color: #999;
}

.tab.active {
  color: #333;
}

.tab.active::after {
  content: "";
  position: absolute;
  top: 35px;
  left: 0;
  right: 0;
  height: 7px;
  border-radius: 4px;
  background: linear-gradient(#ffa000, #ff6600);
}

.row {
  display: flex;
  gap: 19px;
}

.field {
  flex: 1;
  position: relative;
}

.field input {
  display: block;
  width: 100%;
  height: 48px;
  padding: 0 18px;
  border: 1px solid #d0d0d0;
  border-radius: 5px;
  outline: none;
  background: none;
  color: #333;
  appearance: textfield;
}

.field input::-webkit-inner-spin-button {
  display: none;
}

.field input::placeholder {
  color: #999;
}

.field label {
  position: absolute;
  top: -7px;
  left: 14px;
  padding: 0 5px;
  background-color: #fff;
  font-size: 12px;
  line-height: 14px;
  color: #888;
}

.field.strong input {
  border-color: #999;
}

.field.strong label {
  color: #666;
}

.field.focused input {
  padding: 0 17px;
  border: 2px solid #0b8cc4;
}

.field.focused label {
  color: #0b8cc4;
}

.caret {
  position: absolute;
  top: 14px;
  left: 238px;
  width: 1px;
  height: 19px;
  background-color: #ff6600;
}

.highlight {
  position: absolute;
  top: -16px;
  left: -7px;
  width: 456px;
  height: 80px;
  border: 4px solid #e5503c;
  border-radius: 12px;
  pointer-events: none;
}

.pin-button {
  display: flex;
  align-items: center;
  justify-content: center;
  width: 45px;
  border: 1px solid #d0d0d0;
  border-radius: 5px;
}

.spinner {
  position: absolute;
  top: 15px;
  right: 18px;
  fill: #8c8c8c;
}

/* map */
.map {
  position: relative;
  height: 495px;
  overflow: hidden;
  background-color: #f4f0ef;
}

.map-canvas {
  display: block;
  width: 100%;
  height: 100%;
}

.forest {
  fill: #aee3a7;
}

.ground {
  fill: #f4f0ef;
}

.field-area {
  fill: #dfefda;
}

.urban {
  fill: #e3e6ec;
}

.water {
  fill: #97dbff;
}

.street {
  fill: none;
  stroke: #c6cbde;
  stroke-width: 3;
}

.road {
  fill: none;
  stroke: #bcc3db;
  stroke-width: 9;
  stroke-linejoin: round;
}

.wide {
  stroke-width: 12;
}

.highway {
  fill: none;
  stroke: #a0aac6;
  stroke-width: 21;
}

.place text, .road-name text {
  paint-order: stroke;
  stroke: #fff;
  stroke-width: 8px;
  stroke-linejoin: round;
  fill: #333;
}

.place text {
  font-size: 43px;
  text-anchor: middle;
}

.place text[text-anchor="start"] {
  text-anchor: start;
}

.road-name text {
  font-size: 42px;
  font-weight: 500;
}

.shield text {
  font-size: 33px;
  font-weight: 700;
  text-anchor: middle;
  fill: #333;
}

.shield .light {
  fill: #fff;
}

.logo text {
  font-family: "Open Sans", sans-serif;
  font-size: 56px;
  font-weight: 700;
  paint-order: stroke;
  stroke: #888;
  stroke-width: 6px;
  fill: #fff;
}

.get-address {
  position: absolute;
  top: 11px;
  left: 12px;
  width: 151px;
  height: 47px;
  border-radius: 2px;
  background-color: #ff6600;
  box-shadow: 0 6px 14px rgba(0, 0, 0, 0.15);
  font-weight: 700;
  color: #fff;
}

.map-controls {
  position: absolute;
  right: 12px;
  bottom: 11px;
  display: flex;
  flex-direction: column;
  gap: 12px;
}

.control-group {
  border-radius: 5px;
  background-color: #fff;
  box-shadow: 0 0 0 2px rgba(0, 0, 0, 0.1);
}

.control-group button {
  display: flex;
  align-items: center;
  justify-content: center;
  width: 34px;
  height: 34px;
}

.control-group button + button {
  height: 35px;
  border-top: 1px solid #ddd;
}
```
